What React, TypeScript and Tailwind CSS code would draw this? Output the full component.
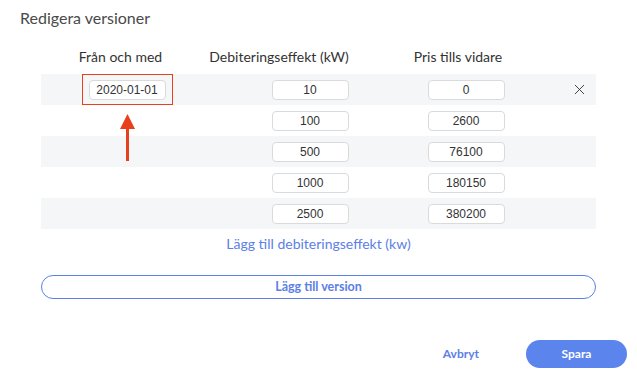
import { X } from "lucide-react";

const rows = [
  { date: "2020-01-01", kw: "10", price: "0" },
  { kw: "100", price: "2600" },
  { kw: "500", price: "76100" },
  { kw: "1000", price: "180150" },
  { kw: "2500", price: "380200" },
];

const ValueInput = ({ value }: { value: string }) => (
  <div className="w-[77px] h-[20px] rounded-[4px] border border-[#dadada] bg-white flex items-center justify-center text-[12px] text-[#333] font-['Liberation_Sans',sans-serif] leading-none">
    {value}
  </div>
);

export default function App() {
  return (
    <div className="relative w-[637px] h-[375px] bg-white overflow-hidden font-['Lato',sans-serif] text-[#333]">
      <h2 className="pt-[6px] pl-[20px] text-[16px] leading-[24px] text-[#4a4a4a]">Redigera versioner</h2>

      <div className="px-[41px] mt-[17px]">
        {/* headers sit a little left of their columns */}
        <div className="grid grid-cols-[159px_158px_200px_1fr] text-[14px] leading-[20px] text-[#333]">
          <div className="text-center">Från och med</div>
          <div className="text-center">Debiteringseffekt (kW)</div>
          <div className="text-center">Pris tills vidare</div>
          <div />
        </div>

        <div className="mt-[7px]">
          {rows.map((r, i) => (
            <div
              key={i}
              className={"grid grid-cols-[172px_194px_118px_1fr] h-[31px] items-center " + (i % 2 === 0 ? "bg-[#f5f6f8]" : "bg-white")}
            >
              <div className="flex justify-center">
                {r.date && (
                  <div className="w-[91px] h-[31px] border border-[#e8401c] flex items-center justify-center">
                    <ValueInput value={r.date} />
                  </div>
                )}
              </div>
              <div className="flex justify-center">
                <ValueInput value={r.kw} />
              </div>
              <div className="flex justify-center">
                <ValueInput value={r.price} />
              </div>
              <div className="flex justify-end pr-[8px]">
                {i === 0 && <X size={17} strokeWidth={1.3} className="text-[#333]" />}
              </div>
            </div>
          ))}
        </div>

        <div className="mt-[5px] text-center text-[14px] leading-[20px] text-[#5b80e6]">Lägg till debiteringseffekt (kw)</div>

        <button className="mt-[21px] w-full h-[24px] rounded-full border border-[#5b80e8] text-[12.5px] font-bold text-[#5b80e6] flex items-center justify-center">
          Lägg till version
        </button>
      </div>

      <div className="flex justify-end items-center mt-[41px] pr-[10px]">
        <button className="text-[12px] font-bold text-[#5b80e6] mr-[47px]">Avbryt</button>
        <button className="w-[101px] h-[28px] rounded-full bg-[#5b84ec] text-white text-[12px] font-bold">Spara</button>
      </div>

      {/* annotation arrow */}
      <svg className="absolute left-[119px] top-[113px]" width="17" height="48" viewBox="0 0 17 48">
        <polygon points="8.5,1 1,16 16,16" fill="#e8401c" />
        <rect x="7" y="15" width="3" height="33" fill="#e8401c" />
      </svg>
    </div>
  );
}
